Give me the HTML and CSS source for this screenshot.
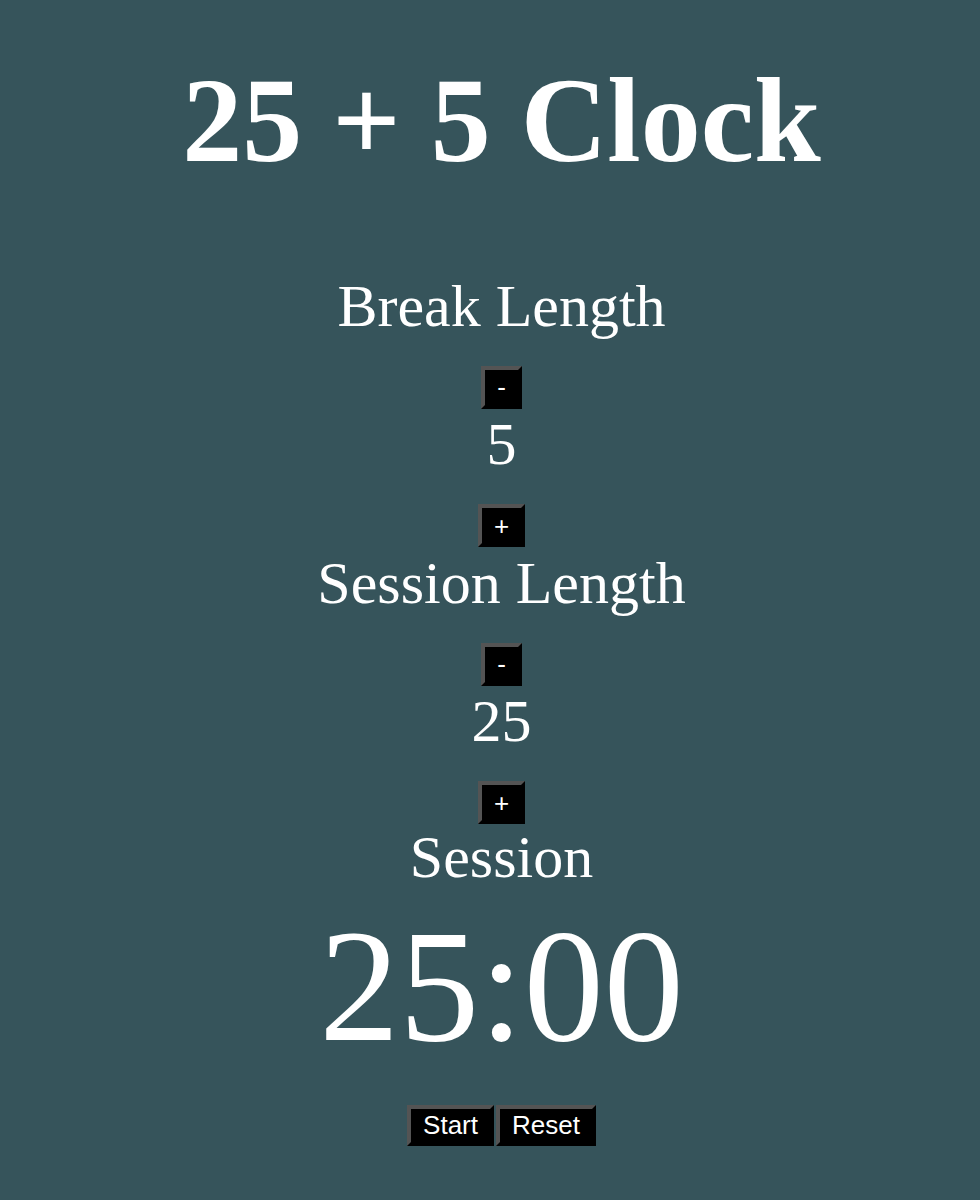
FILE: index.html
```html
<!DOCTYPE html>
<html lang="en">
<head>
<meta charset="utf-8">
<title>25 + 5 Clock</title>
<link rel="stylesheet" href="styles.css">
</head>
<body>
<div class="app">
  <h1 class="title">25 + 5 Clock</h1>
  <div class="label" id="break-label">Break Length</div>
  <button class="btn small" id="break-decrement">-</button>
  <div class="label" id="break-length">5</div>
  <button class="btn small" id="break-increment">+</button>
  <div class="label" id="session-label">Session Length</div>
  <button class="btn small" id="session-decrement">-</button>
  <div class="label" id="session-length">25</div>
  <button class="btn small" id="session-increment">+</button>
  <div class="label timer-label" id="timer-label">Session</div>
  <div class="time" id="time-left">25:00</div>
  <div class="controls">
    <button class="btn big" id="start_stop">Start</button>
    <button class="btn big" id="reset">Reset</button>
  </div>
</div>
</body>
</html>
```

FILE: styles.css
```css
html, body {
  margin: 0;
  padding: 0;
  background: #36545b;
}
body {
  min-height: 1200px;
  color: #ffffff;
  font-family: "Liberation Serif", "Times New Roman", serif;
}
.app {
  display: flex;
  flex-direction: column;
  align-items: center;
  padding-top: 54px;
  padding-left: 23px;
}
.title {
  margin: 0 0 83px 0;
  font-size: 120px;
  line-height: 133px;
  font-weight: bold;
}
.label {
  font-size: 60px;
  line-height: 66px;
  padding-top: 2.5px;
  padding-bottom: 27px;
}
.timer-label {
  padding-top: 0;
  padding-bottom: 0;
}
.time {
  margin-top: 7.5px;
  font-size: 160px;
  line-height: 177px;
}
.btn {
  box-sizing: border-box;
  margin: 0;
  background: #000000;
  color: #ffffff;
  font-family: "Liberation Sans", Arial, sans-serif;
  font-size: 26px;
  line-height: 30px;
  padding: 0 12px;
  border-style: solid;
  border-width: 4px;
  border-color: #545454 #000000 #000000 #545454;
}
.small {
  height: 43px;
}
.controls {
  display: flex;
  gap: 2px;
  margin-top: 30px;
}
.big {
  height: 41px;
}
```
